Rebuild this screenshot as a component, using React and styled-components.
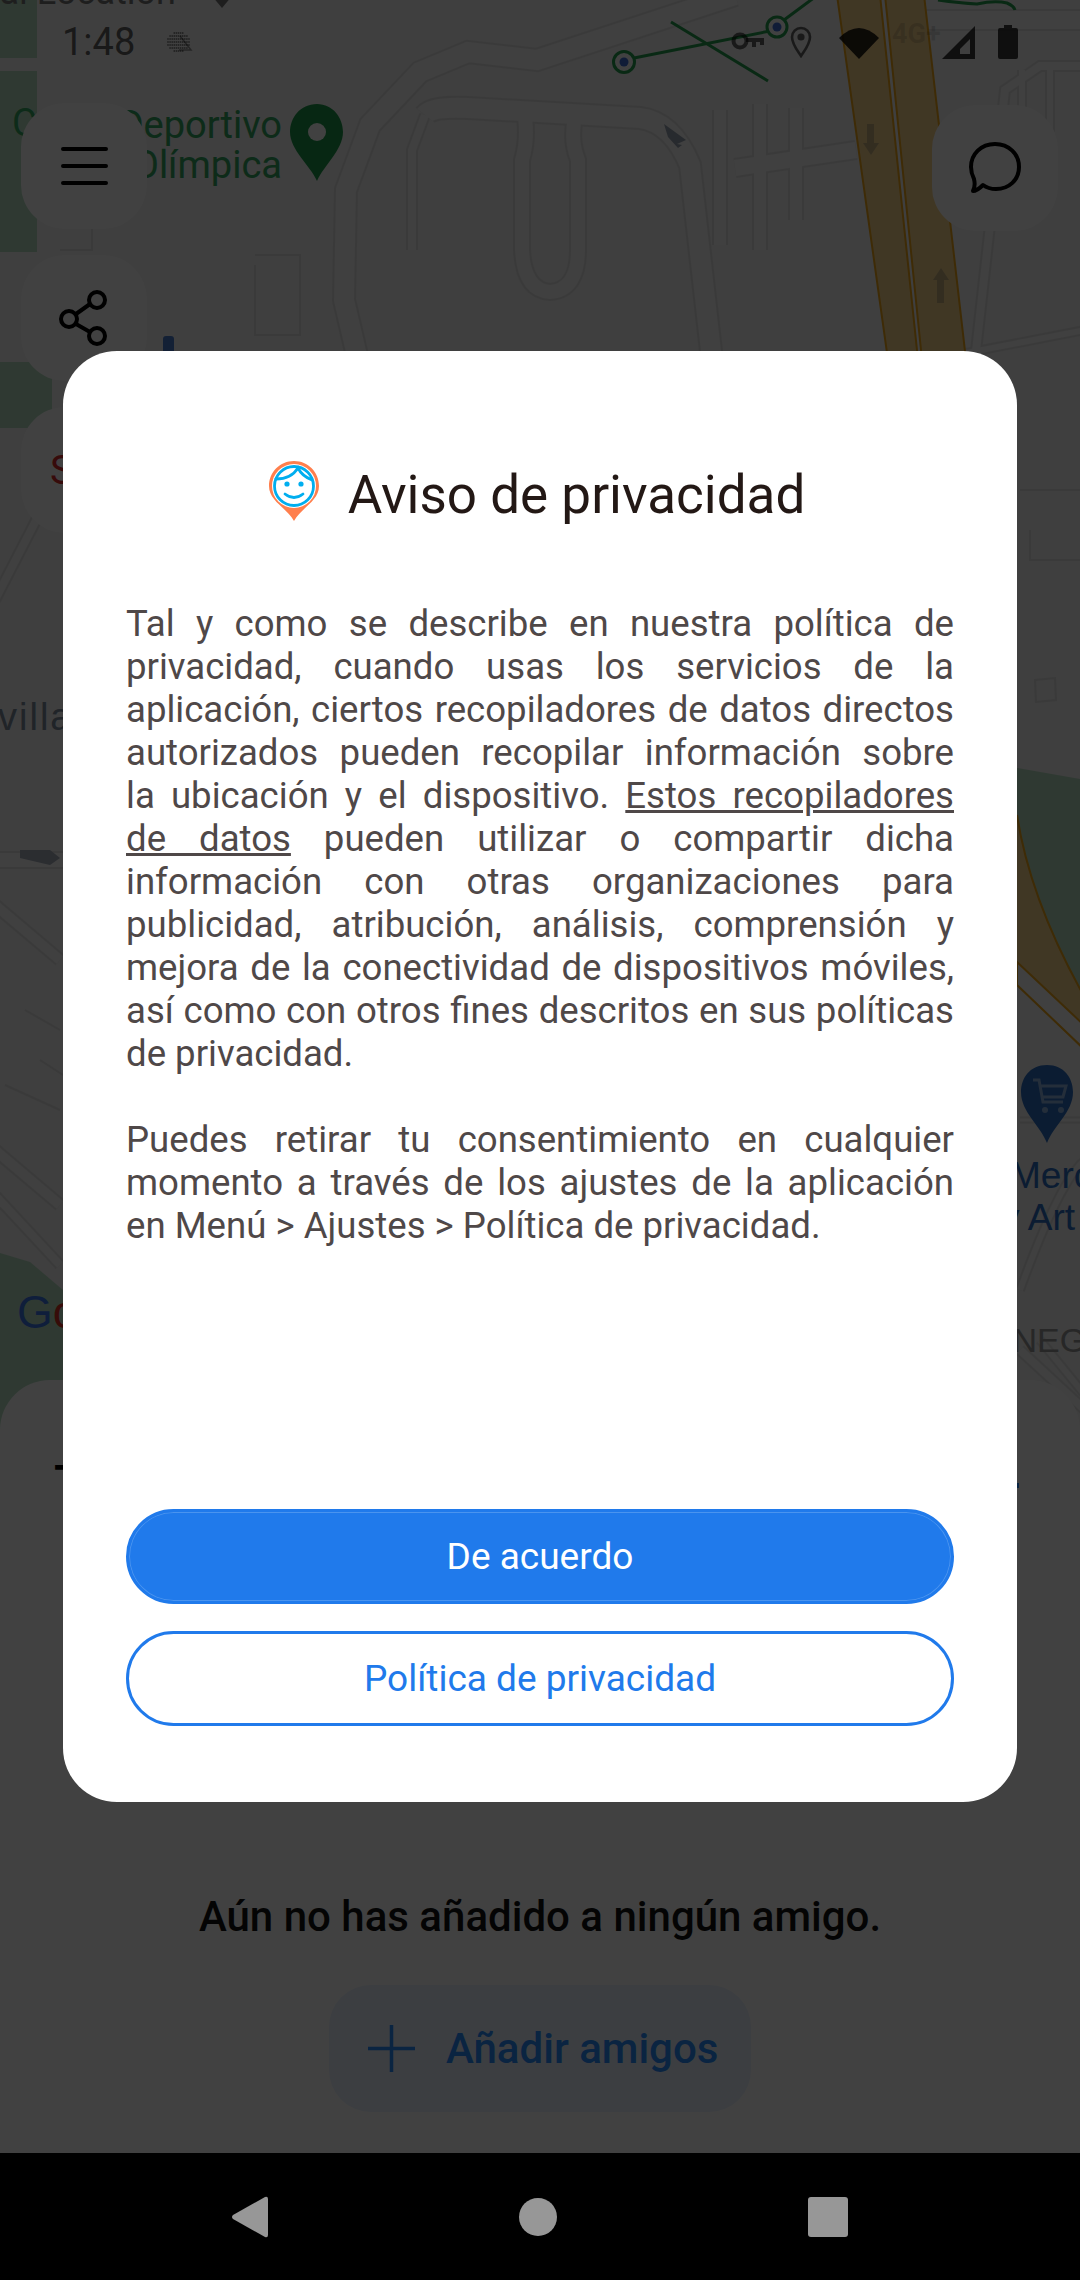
import React from 'react';
import styled, { createGlobalStyle } from 'styled-components';

const GlobalStyle = createGlobalStyle`
  html, body {
    margin: 0;
    padding: 0;
    background: #000;
  }
  * {
    box-sizing: border-box;
  }
`;

const Screen = styled.div`
  position: relative;
  width: 1080px;
  height: 2280px;
  overflow: hidden;
  display: flex;
  flex-direction: column;
  font-family: Roboto, 'Liberation Sans', sans-serif;
`;

const MapArea = styled.div`
  position: relative;
  height: 1430px;
  flex: none;
  background: #f5f5f5;
`;

const MapDrawing = styled.svg`
  display: block;
  width: 1080px;
  height: 1430px;
`;

// status bar sits over the map
const StatusBar = styled.div`
  position: absolute;
  top: 20px;
  left: 62px;
  right: 62px;
  height: 44px;
  display: flex;
  align-items: center;
`;

const Clock = styled.span`
  font-size: 38px;
  line-height: 44px;
  color: rgba(0, 0, 0, 0.62);
  margin-right: 20px;
`;

const StatusIcons = styled.div`
  margin-left: auto;
  display: flex;
  align-items: center;
`;

const StatusIcon = styled.svg`
  display: block;
  flex: none;
  margin-left: ${(p) => p.$gap || 0}px;
`;

const NetworkLabel = styled.span`
  font-size: 27px;
  font-weight: 700;
  line-height: 30px;
  width: 44px;
  margin-left: 13px;
  margin-top: -16px;
  color: rgba(0, 0, 0, 0.14);
`;

const ControlRail = styled.div`
  position: absolute;
  top: 103px;
  left: 21px;
  display: flex;
  flex-direction: column;
  gap: 26px;
`;

const ChatSlot = styled.div`
  position: absolute;
  top: 105px;
  right: 22px;
`;

const MapButton = styled.div`
  width: 126px;
  height: 126px;
  border-radius: 44px;
  background: #fff;
  display: flex;
  align-items: center;
  justify-content: center;
`;

const SearchLetter = styled.span`
  font-size: 40px;
  color: #d92c2c;
  width: 100%;
  padding-left: 29px;
`;

const Sheet = styled.div`
  flex: 1;
  margin-top: -50px;
  position: relative;
  background: #fff;
  border-radius: 50px 50px 0 0;
  display: flex;
  flex-direction: column;
  align-items: center;
  padding-top: 79px;
`;

const SheetHeader = styled.div`
  width: 100%;
  height: 48px;
  padding: 0 61px 0 54px;
  display: flex;
  justify-content: space-between;
`;

const SheetTitle = styled.span`
  font-size: 48px;
  font-weight: 500;
  line-height: 48px;
  color: #000;
`;

const HeaderLink = styled.span`
  width: 30px;
  height: 5px;
  margin-top: 24px;
  background: #2a8cff;
`;

const EmptyText = styled.p`
  margin: 385px 0 0;
  font-size: 42px;
  font-weight: 500;
  line-height: 50px;
  color: #111;
`;

const AddButton = styled.div`
  margin-top: 43px;
  width: 422px;
  height: 127px;
  border-radius: 42px;
  background: #eaf3ff;
  display: flex;
  align-items: center;
  padding-left: 39px;
  gap: 31px;
  font-size: 42px;
  font-weight: 500;
  color: #2a8cff;
`;

const NavBar = styled.div`
  flex: none;
  position: relative;
  z-index: 2;
  height: 127px;
  background: #000;
  display: flex;
  align-items: center;
  justify-content: center;
  gap: 251px;
`;

const Dim = styled.div`
  position: absolute;
  left: 0;
  top: 0;
  width: 1080px;
  height: 2153px;
  background: rgba(0, 0, 0, 0.745);
  display: flex;
  align-items: center;
  justify-content: center;
`;

const Dialog = styled.div`
  width: 954px;
  height: 1451px;
  background: #fff;
  border-radius: 54px;
  padding: 110px 63px 76px;
  display: flex;
  flex-direction: column;
`;

const DialogHead = styled.div`
  height: 60px;
  flex: none;
  display: flex;
  align-items: center;
  justify-content: center;
  gap: 29px;
  padding-right: 6px;
`;

const DialogTitle = styled.h2`
  margin: 7px 0 0;
  font-size: 53px;
  font-weight: 400;
  line-height: 60px;
  color: #231815;
`;

const DialogBody = styled.div`
  margin-top: 81px;
  flex: 1;
  font-size: 36.6px;
  line-height: 43px;
  color: #4f4848;
`;

// forced breaks follow the reference wrapping, last-align keeps them justified
const Paragraph = styled.p`
  margin: 0 0 43px;
  text-align: justify;
  text-align-last: justify;
`;

const LastLine = styled.span`
  display: block;
  text-align-last: left;
`;

const Underlined = styled.span`
  text-decoration: underline;
`;

const PillButton = styled.div`
  height: 95px;
  flex: none;
  border-radius: 48px;
  border: 3px solid #207aeb;
  display: flex;
  align-items: center;
  justify-content: center;
  font-size: 37px;
  margin-top: ${(p) => (p.$filled ? 0 : 27)}px;
  background: ${(p) => (p.$filled ? '#207aeb' : '#fff')};
  color: ${(p) => (p.$filled ? '#fff' : '#207aeb')};
  box-shadow: ${(p) => (p.$filled ? 'inset 0 0 0 1px #4a94ef' : 'none')};
`;

const ROAD_PATHS = [
  { d: 'M735 -5 L537 60 L468 52 L420 72 L370 125 L346 190 L344 300 L358 360', w: 20 },
  { d: 'M425 115 Q432 106 468 108 L640 118 Q672 122 690 165 L712 360', w: 20 },
  { d: 'M425 115 L412 150 V250', w: 8 },
  { d: 'M525 118 Q528 140 522 160 V250 Q524 290 550 292 Q578 290 578 250 V160 Q570 140 575 118', w: 14 },
  { d: 'M720 110 V245', w: 12 },
  { d: 'M760 104 V250', w: 12 },
  { d: 'M796 108 V220', w: 12 },
  { d: 'M735 168 L856 150', w: 16 },
  { d: 'M920 20 H1085', w: 18 },
  { d: 'M975 360 L1005 90 L1040 66 H1085', w: 8 },
  { d: 'M1022 70 V200', w: 6 },
  { d: 'M1050 70 V200', w: 6 },
  { d: 'M930 360 L1085 330', w: 6 },
  { d: 'M-5 905 L60 960', w: 10 },
  { d: 'M-5 600 L62 470', w: 8 },
  { d: 'M40 490 H65', w: 8 },
  { d: 'M-5 860 H65', w: 14 },
  { d: 'M-5 1150 L60 1205', w: 10 },
  { d: 'M-5 1195 L60 1265', w: 8 },
  { d: 'M1020 1120 H1085', w: 3 },
  { d: 'M1020 1290 Q1060 1180 1085 1160', w: 6 },
  { d: 'M1020 1350 L1085 1410', w: 8 },
  { d: 'M1040 1340 L1085 1395', w: 6 },
];

const GREEN_BLOCKS = [
  'M0 0 H37 V58 H0 Z',
  'M0 71 H37 V252 H0 Z',
  'M0 362 H52 V428 H0 Z',
  'M0 1253 L30 1262 L63 1290 V1440 H0 Z',
  'M1000 765 L1085 780 V1000 Q1040 960 1010 830 Z',
];

const BLOCK_OUTLINES = [
  'M92 180 V250 H60',
  'M1020 490 H1080 M1030 530 V560 H1080',
  'M1035 680 L1055 678 L1056 700 L1036 702 Z',
  'M25 1010 L60 1030 M40 1060 L63 1075 M5 1085 L60 1110',
  'M255 265 V335 H300 V255 H255',
];

// the muted map that shows behind the dialog
function MapBackground() {
  return (
    <MapDrawing viewBox="0 0 1080 1430">
      {GREEN_BLOCKS.map((d) => (
        <path key={d} d={d} fill="#b8e0c4" />
      ))}
      {ROAD_PATHS.map((r) => (
        <path key={r.d} d={r.d} fill="none" stroke="#e4e4e4" strokeWidth={r.w + 4} />
      ))}
      {ROAD_PATHS.map((r) => (
        <path key={r.d + 'in'} d={r.d} fill="none" stroke="#f9f9f9" strokeWidth={r.w} />
      ))}
      {BLOCK_OUTLINES.map((d) => (
        <path key={d} d={d} fill="none" stroke="#e2e2e2" strokeWidth="2" />
      ))}
      <path d="M837 -5 L880 -5 L918 360 H888 Z" fill="#fcd78f" stroke="#f2a818" strokeWidth="2" />
      <path d="M885 -5 L924 -5 L966 360 H922 Z" fill="#fcd78f" stroke="#f2a818" strokeWidth="2" />
      <path d="M1017 815 Q1030 900 1085 998 V1052 L1017 985 Z" fill="#fcd78f" />
      <path d="M1017 815 Q1030 900 1085 998" fill="none" stroke="#f2a818" strokeWidth="2" />
      <path d="M1017 962 L1085 1026 V1050 L1017 985 Z" fill="#f9f9f9" stroke="#f2a818" strokeWidth="2" />
      <path d="M867 124 H874 V143 H879 L871 155 L863 143 H867 Z" fill="#c6b27f" />
      <path d="M937 303 H944 V280 H949 L941 268 L933 280 H937 Z" fill="#c6b27f" />
      <path d="M664 124 L686 140 L677 144 L682 145 L678 148 L668 137 Z" fill="#9aa4b3" />
      <path d="M20 850 L50 850 L60 858 L50 865 L20 858 Z" fill="#a7afbd" />

      {/* transit line */}
      <g fill="none" stroke="#25a04f" strokeWidth="3">
        <path d="M634 58 L770 31 M784 20 L815 -3 M671 22 L768 81" />
        <circle cx="624" cy="62" r="10.5" fill="#fff" />
        <circle cx="777" cy="27" r="10" fill="#fff" />
        <path d="M938 0 Q960 3 977 4 Q995 0 1007 3 Q1014 6 1015 10" />
      </g>
      <circle cx="624" cy="62" r="4.5" fill="#3f70d8" />
      <circle cx="777" cy="27" r="4.5" fill="#3f70d8" />

      {/* place pin and labels */}
      <path d="M317 104 C300 104 290 118 290 132 C290 150 310 165 317 181 C324 165 343 150 343 132 C343 118 333 104 317 104 Z" fill="#1f9b4a" />
      <circle cx="317" cy="132" r="9" fill="#fff" />
      <g fontFamily="Roboto, sans-serif" fontSize="38" fill="#36a862">
        <text x="12" y="136">C</text>
        <text x="282" y="138" textAnchor="end">Deportivo</text>
        <text x="282" y="178" textAnchor="end">Olímpica</text>
      </g>
      <text x="176" y="4" textAnchor="end" fontFamily="Roboto, sans-serif" fontSize="36" fill="#777">Actual Location</text>
      <path d="M212 -4 L222 8 L232 -4" fill="#777" />
      <text x="-2" y="730" fontFamily="'Liberation Sans', sans-serif" fontSize="38" letterSpacing="2" fill="#7d8c9f">villa</text>
      <rect x="163" y="336" width="11" height="24" rx="3" fill="#4d7fd0" />

      {/* google mark */}
      <text x="17" y="1328" fontFamily="'Liberation Sans', sans-serif" fontSize="46">
        <tspan fill="#3b78e7">G</tspan>
        <tspan fill="#d93025">o</tspan>
      </text>

      {/* shop pin */}
      <path d="M1047 1065 C1030 1065 1021 1078 1021 1092 C1021 1112 1040 1125 1047 1143 C1054 1125 1073 1112 1073 1092 C1073 1078 1064 1065 1047 1065 Z" fill="#2c6ec4" />
      <path d="M1033 1080 H1039 L1043 1102 H1063 M1040 1086 H1066 L1063 1097 H1042" fill="none" stroke="#8fb4e2" strokeWidth="3" />
      <circle cx="1045" cy="1110" r="3" fill="#8fb4e2" />
      <circle cx="1061" cy="1110" r="3" fill="#8fb4e2" />
      <g fontFamily="'Liberation Sans', sans-serif" fontSize="37" fill="#2c6ec4">
        <text x="1010" y="1188">Merc</text>
        <text x="1001" y="1230">y Art</text>
      </g>
      <text x="1003" y="1352" fontFamily="'Liberation Sans', sans-serif" fontSize="34" fill="#999">INEGI</text>
    </MapDrawing>
  );
}

const HEDGEHOG_DOTS = [];
for (let row = 0; row < 7; row++) {
  for (let col = 0; col < 11; col++) {
    const dx = col - 5;
    const dy = row - 3;
    if (dx * dx + dy * dy * 2.4 < 28) {
      HEDGEHOG_DOTS.push([13 + col * 2.1, 3 + row * 3]);
    }
  }
}

function App() {
  return (
    <>
      <GlobalStyle />
      <Screen>
        <MapArea>
          <MapBackground />
          <StatusBar>
            <Clock>1:48</Clock>
            <svg width="38" height="24" viewBox="0 0 38 24">
              {HEDGEHOG_DOTS.map(([x, y]) => (
                <circle key={x + '-' + y} cx={x} cy={y} r="0.9" fill="rgba(0,0,0,.45)" />
              ))}
              <path d="M25 6 L36 20 H24" fill="none" stroke="rgba(0,0,0,.4)" strokeWidth="1.5" />
            </svg>
            <StatusIcons>
              <StatusIcon width="33" height="20" viewBox="0 0 33 20" fill="none" stroke="rgba(0,0,0,.6)">
                <circle cx="9" cy="9" r="6.5" strokeWidth="4" />
                <path d="M15 8 H31 V13 M23 8 V15" strokeWidth="4" />
              </StatusIcon>
              <StatusIcon $gap={26} width="22" height="32" viewBox="0 0 22 32" fill="none" stroke="rgba(0,0,0,.6)">
                <path d="M11 30 C7 24 2 18 2 11 A9 9 0 0 1 20 11 C20 18 15 24 11 30 Z" strokeWidth="2.6" />
                <circle cx="11" cy="11" r="3.6" fill="rgba(0,0,0,.6)" stroke="none" />
              </StatusIcon>
              <StatusIcon $gap={27} width="40" height="33" viewBox="0 0 40 33">
                <path d="M0 12 Q20 -8 40 12 L20 33 Z" fill="rgba(0,0,0,.82)" />
              </StatusIcon>
              <NetworkLabel>4G+</NetworkLabel>
              <StatusIcon $gap={6} width="33" height="33" viewBox="0 0 33 33">
                <path d="M0 33 L33 0 V33 Z M18 28 H28 V13 L18 23 Z" fillRule="evenodd" fill="rgba(0,0,0,.75)" />
              </StatusIcon>
              <StatusIcon $gap={23} width="20" height="34" viewBox="0 0 20 34">
                <path d="M6 0 H14 V3 H18 Q20 3 20 5 V32 Q20 34 18 34 H2 Q0 34 0 32 V5 Q0 3 2 3 H6 Z" fill="rgba(0,0,0,.75)" />
              </StatusIcon>
            </StatusIcons>
          </StatusBar>
          <ControlRail>
            <MapButton>
              <svg width="47" height="38" viewBox="0 0 47 38" fill="none" stroke="#000" strokeWidth="4" strokeLinecap="round">
                <path d="M2 2 H45 M2 19 H45 M2 36 H45" />
              </svg>
            </MapButton>
            <MapButton>
              <svg width="50" height="56" viewBox="0 0 50 56" fill="none" stroke="#000" strokeWidth="4">
                <circle cx="38" cy="10" r="8" />
                <circle cx="10" cy="29" r="8" />
                <circle cx="38" cy="46" r="8" />
                <path d="M17 24 L31 14 M17 34 L31 42" />
              </svg>
            </MapButton>
            <MapButton>
              <SearchLetter>S</SearchLetter>
            </MapButton>
          </ControlRail>
          <ChatSlot>
            <MapButton>
              <svg width="54" height="54" viewBox="0 0 54 54" fill="none" stroke="#000" strokeWidth="4" strokeLinejoin="round">
                <path d="M27 3 C41 3 51 13 51 26 C51 39 41 48 28 48 C23 48 19 47 15 44 C12 47 8 50 5 50 C7 46 7 42 6 38 C4 34 3 30 3 26 C3 13 13 3 27 3 Z" />
              </svg>
            </MapButton>
          </ChatSlot>
        </MapArea>

        <Sheet>
          <SheetHeader>
            <SheetTitle>T</SheetTitle>
            <HeaderLink />
          </SheetHeader>
          <EmptyText>Aún no has añadido a ningún amigo.</EmptyText>
          <AddButton>
            <svg width="47" height="47" viewBox="0 0 47 47" stroke="#2a8cff" strokeWidth="3.5">
              <path d="M23.5 0 V47 M0 23.5 H47" />
            </svg>
            Añadir amigos
          </AddButton>
        </Sheet>

        <NavBar>
          <svg width="36" height="42" viewBox="0 0 36 42">
            <path d="M33 1 Q36 0 36 3 V39 Q36 42 33 41 L1 23 Q-1 21 1 19 Z" fill="#979797" />
          </svg>
          <svg width="38" height="38" viewBox="0 0 38 38">
            <circle cx="19" cy="19" r="19" fill="#979797" />
          </svg>
          <svg width="40" height="40" viewBox="0 0 40 40">
            <rect width="40" height="40" rx="3" fill="#979797" />
          </svg>
        </NavBar>

        <Dim>
          <Dialog>
            <DialogHead>
              <svg width="50" height="60" viewBox="0 0 50 60">
                <path d="M25 0 C11 0 0 11 0 25 C0 40 17 46 25 60 C33 46 50 40 50 25 C50 11 39 0 25 0 Z" fill="#ff7f4d" />
                <circle cx="25" cy="25" r="22" fill="#fff" />
                <g fill="none" stroke="#00aeef" strokeWidth="2.8" strokeLinecap="round">
                  <circle cx="25" cy="25" r="19.5" />
                  <path d="M7 18 C16 18 24 15 29 7 C32 13 38 17 43 19" />
                  <path d="M16 33 Q25 40 34 33" />
                </g>
                <circle cx="18" cy="23" r="2.6" fill="#00aeef" />
                <circle cx="32" cy="23" r="2.6" fill="#00aeef" />
              </svg>
              <DialogTitle>Aviso de privacidad</DialogTitle>
            </DialogHead>
            <DialogBody>
              <Paragraph>
                Tal y como se describe en nuestra política de<br />
                privacidad, cuando usas los servicios de la<br />
                aplicación, ciertos recopiladores de datos directos<br />
                autorizados pueden recopilar información sobre<br />
                la ubicación y el dispositivo. <Underlined>Estos recopiladores<br />
                de datos</Underlined> pueden utilizar o compartir dicha<br />
                información con otras organizaciones para<br />
                publicidad, atribución, análisis, comprensión y<br />
                mejora de la conectividad de dispositivos móviles,<br />
                así como con otros fines descritos en sus políticas<br />
                <LastLine>de privacidad.</LastLine>
              </Paragraph>
              <Paragraph>
                Puedes retirar tu consentimiento en cualquier<br />
                momento a través de los ajustes de la aplicación<br />
                <LastLine>en Menú &gt; Ajustes &gt; Política de privacidad.</LastLine>
              </Paragraph>
            </DialogBody>
            <PillButton $filled>De acuerdo</PillButton>
            <PillButton>Política de privacidad</PillButton>
          </Dialog>
        </Dim>
      </Screen>
    </>
  );
}

export default App;
